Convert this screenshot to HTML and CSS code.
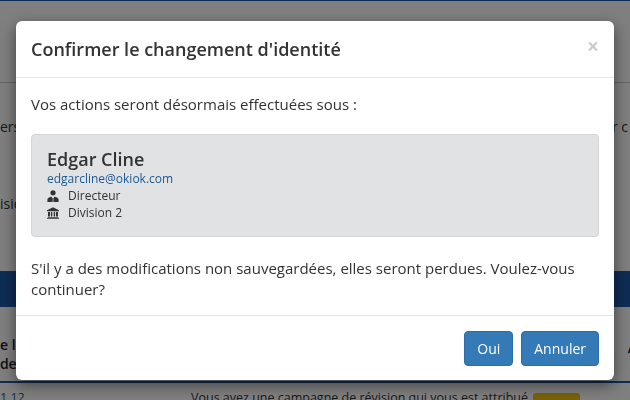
FILE: index.html
```html
<!DOCTYPE html>
<html lang="fr">
<head>
    <meta charset="UTF-8">
    <title>Changement d'identité</title>
    <link rel="stylesheet" href="styles.css">
</head>
<body>
<div class="page">
    <div class="top-bar"></div>
    <div class="nav-row"></div>
    <div class="intro">
        <p class="intro-line"><span>ers</span><span>r c</span></p>
        <p class="intro-side">isio</p>
    </div>
    <div class="band"></div>
    <div class="heads">
        <div>e l.<br><span class="cut">nde</span></div>
        <div class="head-right">A</div>
    </div>
    <div class="band-thin"></div>
    <div class="row">
        <span class="row-num">1.12</span>
        <span class="row-text">Vous avez une campagne de révision qui vous est attribué</span>
        <span class="row-badge"></span>
    </div>
</div>

<div class="overlay">
    <div class="modal">
        <div class="modal-header">
            <h4 class="modal-title">Confirmer le changement d'identité</h4>
            <span class="close">×</span>
        </div>
        <div class="modal-body">
            <p class="lead-line">Vos actions seront désormais effectuées sous :</p>
            <div class="well">
                <div class="name">Edgar Cline</div>
                <a class="email">edgarcline@okiok.com</a>
                <div class="info">
                    <svg class="icon" viewBox="0 0 12 12"><circle cx="6" cy="2.8" r="2.6"/><path d="M0.4 12V9.4C0.4 8 2.4 6.9 4.5 6.7L5.3 8 4.9 12ZM11.6 12V9.4C11.6 8 9.6 6.9 7.5 6.7L6.7 8 7.1 12ZM5.6 8H6.4L6.7 12H5.3Z"/></svg>
                    <span>Directeur</span>
                </div>
                <div class="info">
                    <svg class="icon" viewBox="0 0 12 12"><path d="M6 0.3L12 3.2V4.2H0V3.2ZM1 5H3V9.5H1ZM3.9 5H5.3V9.5H3.9ZM6.7 5H8.1V9.5H6.7ZM9 5H11V9.5H9ZM0.6 10.2H11.4V11H0.6ZM0 11.2H12V12H0Z"/></svg>
                    <span>Division 2</span>
                </div>
            </div>
            <p class="warn">S'il y a des modifications non sauvegardées, elles seront perdues. Voulez-vous continuer?</p>
        </div>
        <div class="modal-footer">
            <button class="btn">Oui</button>
            <button class="btn">Annuler</button>
        </div>
    </div>
</div>
</body>
</html>
```

FILE: styles.css
```css
*{
    margin: 0;
    padding: 0;
    box-sizing: border-box;
}
html,body{
    height: 100%;
    overflow: hidden;
}
body{
    font-family: "Open Sans", "Liberation Sans", sans-serif;
    font-size: 15px;
    line-height: 1.42857;
    color: #333;
    background: #fff;
}
.page{
    height: 400px;
    overflow: hidden;
}
.top-bar{
    height: 1px;
    background: #1e5aa8;
}
.nav-row{
    height: 82px;
    border-bottom: 1px solid #ccc;
}
.intro{
    height: 188px;
    padding-top: 34px;
    font-size: 14px;
}
.intro-line{
    display: flex;
    justify-content: space-between;
}
.intro-line span:last-child{
    margin-right: 2px;
}
.intro-side{
    margin-top: 57px;
}
.band{
    height: 36px;
    background: #1e5aa8;
}
.heads{
    height: 74px;
    padding-top: 28px;
    display: flex;
    justify-content: space-between;
    font-weight: 600;
    font-size: 14px;
    line-height: 19px;
    color: #222;
}
.cut{
    margin-left: -9px;
}
.head-right{
    margin-right: -7px;
    margin-top: 3px;
}
.band-thin{
    height: 2px;
    background: #1e5aa8;
}
.row{
    height: 30px;
    display: flex;
    font-size: 12.5px;
    color: #1f5a9e;
    padding-top: 6px;
}
.row-num{
    width: 191px;
}
.row-text{
    color: #333;
    white-space: nowrap;
    width: 342px;
}
.row-badge{
    width: 47px;
    height: 20px;
    margin-top: 4px;
    background: #f0c20e;
    border-radius: 3px;
}
/* boite modale par dessus la page */
.overlay{
    position: fixed;
    top: 0;
    left: 0;
    right: 0;
    bottom: 0;
    background: rgba(0,0,0,.5);
    padding: 21px 16px 0;
}
.modal{
    height: 359px;
    background: #fff;
    border-radius: 6px;
    box-shadow: 0 5px 15px rgba(0,0,0,.5);
    display: flex;
    flex-direction: column;
}
.modal-header{
    flex: none;
    display: flex;
    justify-content: space-between;
    align-items: center;
    height: 57px;
    padding: 0 15px;
    border-bottom: 1px solid #e5e5e5;
}
.modal-title{
    font-size: 18px;
    font-weight: 600;
    line-height: 26px;
}
.close{
    font-size: 21px;
    font-weight: 700;
    line-height: 1;
    color: #000;
    opacity: .2;
    margin-top: -6px;
}
.modal-body{
    flex: 1;
    padding: 16px 15px 0;
}
.lead-line{
    margin-bottom: 19px;
}
.well{
    height: 103px;
    padding: 14px 15px;
    background: #e1e2e4;
    border: 1px solid #d4d5d7;
    border-radius: 4px;
    font-size: 12px;
    line-height: 17px;
}
.name{
    font-size: 18px;
    font-weight: 600;
    line-height: 21px;
}
.email{
    display: block;
    color: #1b5a92;
}
.info{
    display: flex;
    align-items: center;
    height: 17px;
}
.icon{
    width: 12px;
    height: 12px;
    fill: #333;
    margin-right: 9px;
}
.warn{
    margin-top: 21px;
    line-height: 21px;
}
.modal-footer{
    flex: none;
    display: flex;
    justify-content: flex-end;
    gap: 8px;
    height: 65px;
    padding: 15px;
    border-top: 1px solid #e5e5e5;
}
.btn{
    font-family: inherit;
    font-size: 14px;
    line-height: 20px;
    height: 35px;
    padding: 6px 12px;
    color: #fff;
    background: #337ab7;
    border: 1px solid #2e6da4;
    border-radius: 4px;
}
```
